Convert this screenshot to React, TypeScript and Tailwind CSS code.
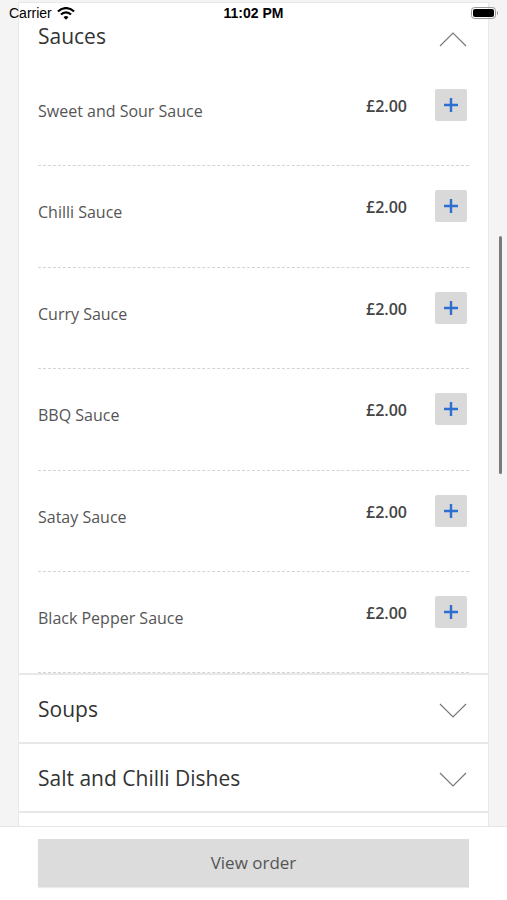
import React from "react";

const items = [
  "Sweet and Sour Sauce",
  "Chilli Sauce",
  "Curry Sauce",
  "BBQ Sauce",
  "Satay Sauce",
  "Black Pepper Sauce",
];

function Chevron({ up }: { up?: boolean }) {
  return (
    <svg width="28" height="15" viewBox="0 0 28 15" fill="none">
      <path
        d={up ? "M1 14 L14 1 L27 14" : "M1 1 L14 14 L27 1"}
        stroke="#777"
        strokeWidth="1.2"
      />
    </svg>
  );
}

function Plus() {
  return (
    <svg width="16" height="16" viewBox="0 0 16 16">
      <path d="M8 1 V15 M1 8 H15" stroke="#2c6fd1" strokeWidth="2.4" />
    </svg>
  );
}

export default function App() {
  return (
    <div
      className="relative h-[900px] w-[507px] overflow-hidden bg-[#f4f4f4]"
      style={{ fontFamily: '"Open Sans", "Noto Sans", sans-serif' }}
    >
      <div className="flex flex-col px-[18px] pt-[2px]">
        <div className="border border-[#e8e8e8] bg-white">
          <div className="flex h-[62px] items-start justify-between pl-[19px] pr-[21px]">
            <div className="mt-[19px] text-[21px] leading-[28px] text-[#333]">Sauces</div>
            <div className="mt-[29px]">
              <Chevron up />
            </div>
          </div>
          {items.map((name) => (
            <div key={name} className="mx-[19px] h-[101.4px] border-b border-dashed border-[#d4d4d4]">
              <div className="flex items-start">
                <div className="mt-[35px] flex-1 text-[16px] leading-[22px] text-[#555]">{name}</div>
                <div className="mt-[30px] text-[16px] font-semibold leading-[22px] text-[#444]">£2.00</div>
                <div className="ml-[28px] mr-[2px] mt-[24px] flex h-[32px] w-[32px] items-center justify-center rounded-[2px] bg-[#d9d9d9]">
                  <Plus />
                </div>
              </div>
            </div>
          ))}
        </div>
        <div className="flex h-[69px] items-center justify-between border border-[#e8e8e8] bg-white pl-[19px] pr-[21px]">
          <div className="text-[21px] leading-[28px] text-[#333]">Soups</div>
          <div className="mt-[4px]">
            <Chevron />
          </div>
        </div>
        <div className="flex h-[69px] items-center justify-between border border-[#e8e8e8] bg-white pl-[19px] pr-[21px]">
          <div className="text-[21px] leading-[28px] text-[#333]">Salt and Chilli Dishes</div>
          <div className="mt-[4px]">
            <Chevron />
          </div>
        </div>
        <div className="h-[69px] border border-[#e8e8e8] bg-white" />
      </div>

      {/* scroll indicator */}
      <div className="absolute left-[499px] top-[236px] h-[238px] w-[3px] rounded-full bg-[#7a7a7a]" />

      {/* status bar */}
      <div className="absolute left-0 right-0 top-0 flex h-[26px] items-center px-[9px] text-[14px] text-black">
        <div className="flex flex-1 items-center gap-[5px]" style={{ fontFamily: '"Liberation Sans", sans-serif' }}>
          <span>Carrier</span>
          <svg width="18" height="13" viewBox="0 0 18 13">
            <path d="M1 4.5 A11 11 0 0 1 17 4.5" stroke="#000" strokeWidth="2.2" fill="none" />
            <path d="M4 7.6 A6.8 6.8 0 0 1 14 7.6" stroke="#000" strokeWidth="2.2" fill="none" />
            <path d="M6.5 10.3 L9 12.8 L11.5 10.3 A3.5 3.5 0 0 0 6.5 10.3 Z" fill="#000" />
          </svg>
        </div>
        <div className="font-semibold" style={{ fontFamily: '"Liberation Sans", sans-serif' }}>11:02 PM</div>
        <div className="flex flex-1 justify-end">
          <div className="flex items-center">
            <div className="flex h-[12px] w-[25px] items-center rounded-[3.5px] border border-[#999] p-[1px]">
              <div className="h-full w-full rounded-[2px] bg-black" />
            </div>
            <div className="ml-[1px] h-[4px] w-[1.5px] rounded-r-sm bg-[#999]" />
          </div>
        </div>
      </div>

      {/* footer */}
      <div className="absolute bottom-0 left-0 right-0 h-[74px] border-t border-[#e6e6e6] bg-white px-[38px] pt-[12px]">
        <div className="flex h-[48px] items-center justify-center bg-[#dcdcdc] text-[17px] text-[#555] shadow-[0_1px_1px_rgba(0,0,0,0.08)]">
          View order
        </div>
      </div>
    </div>
  );
}
